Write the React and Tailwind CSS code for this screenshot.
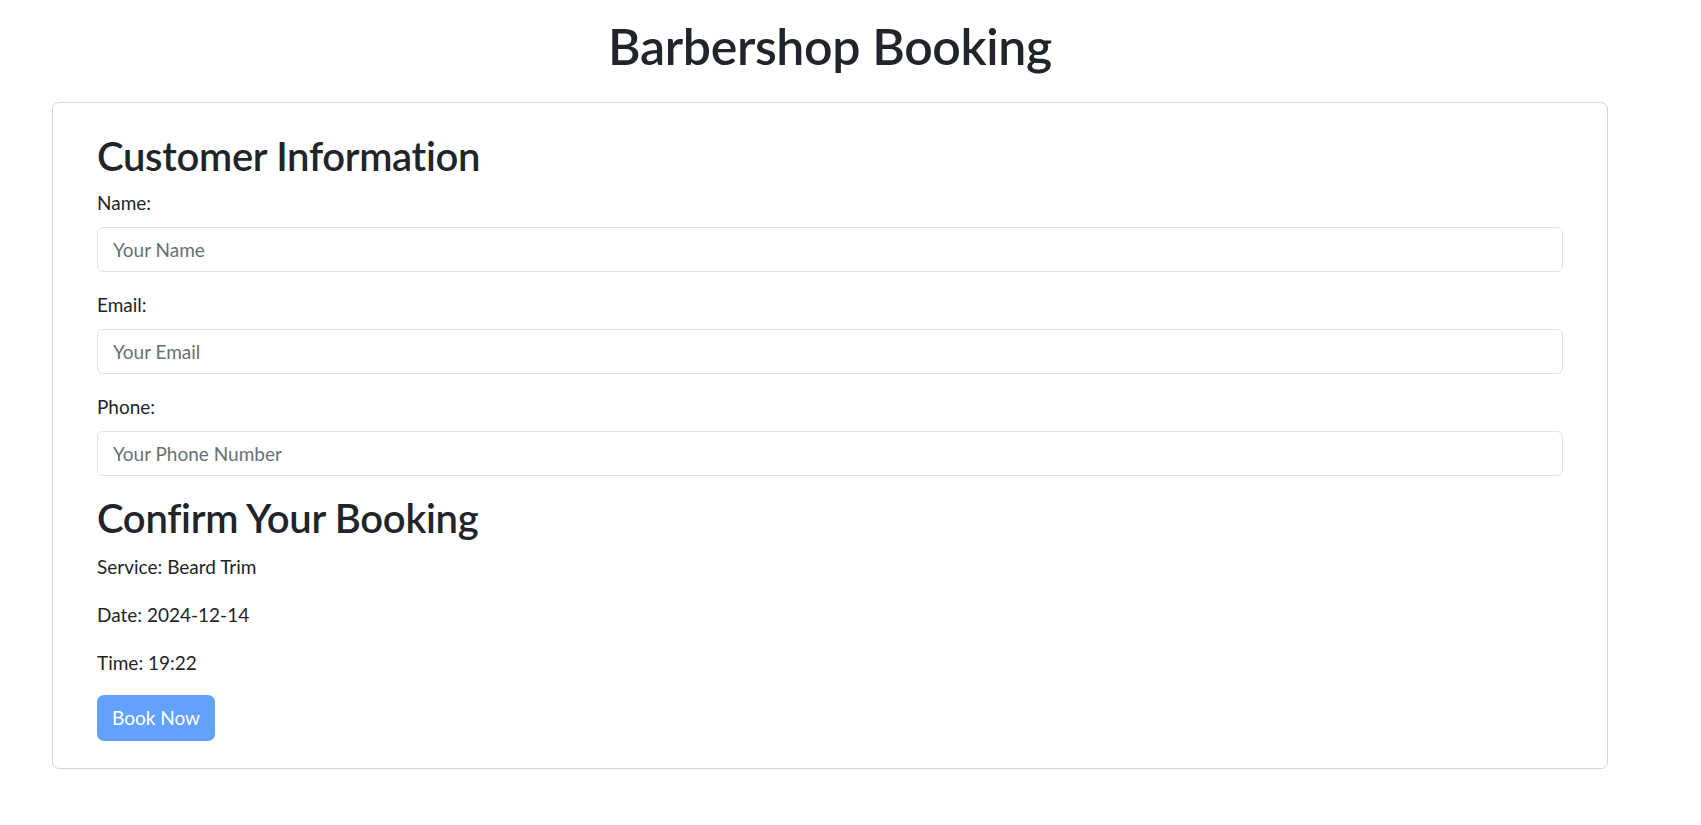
const fields = [
  { label: 'Name:', type: 'text', placeholder: 'Your Name' },
  { label: 'Email:', type: 'email', placeholder: 'Your Email' },
  { label: 'Phone:', type: 'tel', placeholder: 'Your Phone Number' },
];

const booking = { service: 'Beard Trim', date: '2024-12-14', time: '19:22' };

export default function App() {
  return (
    <div className="min-h-screen bg-white font-['Lato',sans-serif] text-[#212529]">
      <div className="ml-[52px] w-[1556px] pt-[16px]">
        <h1 className="text-center text-[50px] font-semibold leading-[60px] tracking-[-0.35px]">Barbershop Booking</h1>

        <div className="mt-[26px] rounded-[7px] border border-[#d3d4d5] px-[44px] pt-[29px] pb-[27px]">
          <h2 className="mb-2 text-[40px] font-semibold leading-[48px] tracking-[-0.3px]">Customer Information</h2>

          {fields.map((f) => (
            <div key={f.label} className="mb-[18px]">
              <label className="mb-[9px] block text-[19px] leading-[30px]">{f.label}</label>
              <input
                type={f.type}
                placeholder={f.placeholder}
                className="block h-[45px] w-full rounded-[6px] border border-[#dee2e6] px-[15px] text-[19px] leading-[30px] placeholder:text-[#686f77] focus:outline-none"
              />
            </div>
          ))}

          <h2 className="mt-[1px] mb-[10px] text-[40px] font-semibold leading-[48px] tracking-[-0.3px]">Confirm Your Booking</h2>
          <p className="mb-[18px] text-[19px] leading-[30px]">Service: {booking.service}</p>
          <p className="mb-[18px] text-[19px] leading-[30px]">Date: {booking.date}</p>
          <p className="mb-[17px] text-[19px] leading-[30px]">Time: {booking.time}</p>

          <button
            disabled
            className="h-[46px] rounded-[7px] bg-[#62a1fe] px-[15px] text-[19px] leading-[30px] text-white"
          >
            Book Now
          </button>
        </div>
      </div>
    </div>
  );
}
